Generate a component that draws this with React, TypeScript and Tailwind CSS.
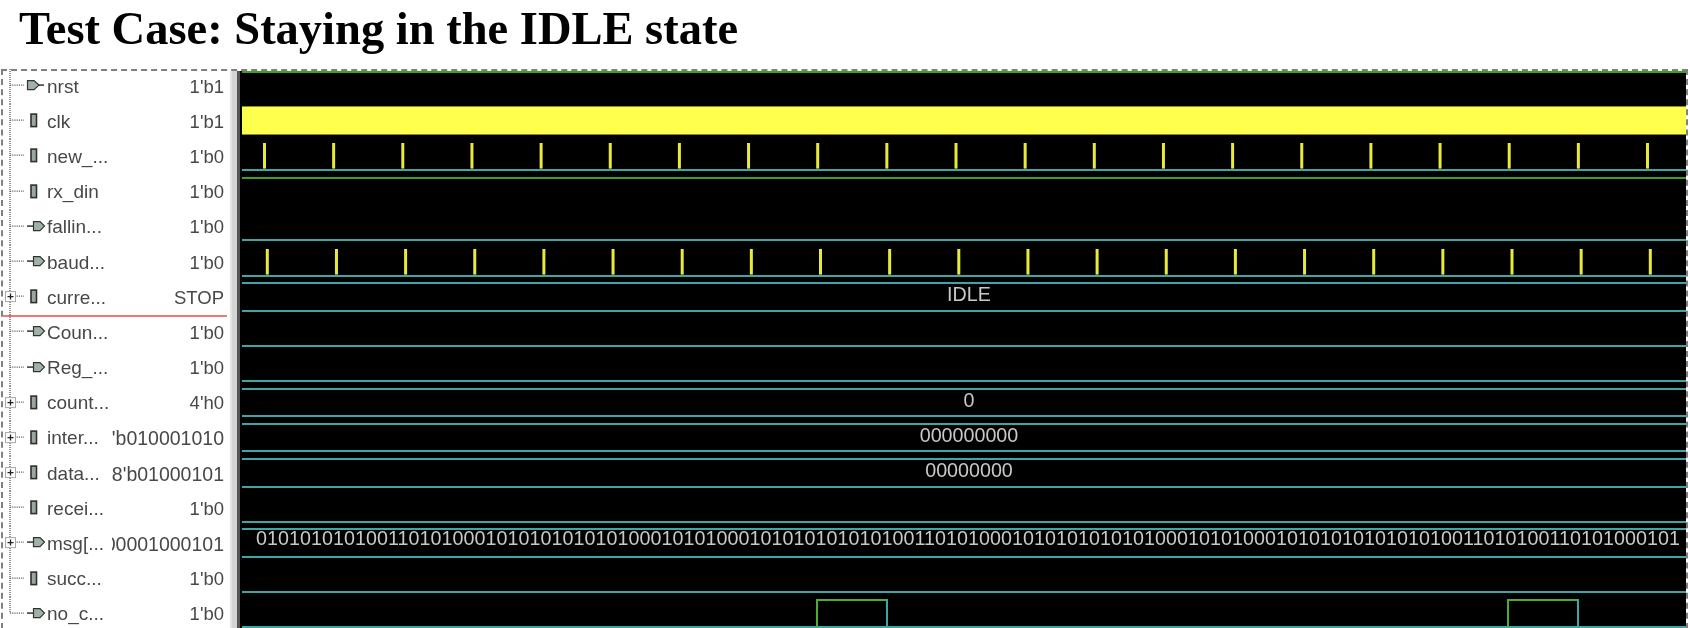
const TICKS_NEW = Array.from({ length: 21 }, (_, i) => 22.5 + i * 69.15);
const TICKS_BAUD = TICKS_NEW.map((x) => x + 2.8);
const MSG =
  '0101010101001' +
  '10101000' +
  '1010101010101000' +
  '10101000' +
  '1010101010101001' +
  '10101000' +
  '1010101010101000' +
  '10101000' +
  '101010101010101001' +
  '10101001' +
  '10101000' +
  '101';

type Port = 'in' | 'out' | 'reg';

interface Signal {
  name: string;
  value: string;
  port: Port;
  expand?: boolean;
}

const SIGNALS: Signal[] = [
  { name: 'nrst', value: "1'b1", port: 'in' },
  { name: 'clk', value: "1'b1", port: 'reg' },
  { name: 'new_...', value: "1'b0", port: 'reg' },
  { name: 'rx_din', value: "1'b0", port: 'reg' },
  { name: 'fallin...', value: "1'b0", port: 'out' },
  { name: 'baud...', value: "1'b0", port: 'out' },
  { name: 'curre...', value: 'STOP', port: 'reg', expand: true },
  { name: 'Coun...', value: "1'b0", port: 'out' },
  { name: 'Reg_...', value: "1'b0", port: 'out' },
  { name: 'count...', value: "4'h0", port: 'reg', expand: true },
  { name: 'inter...', value: "9'b010001010", port: 'reg', expand: true },
  { name: 'data...', value: "8'b01000101", port: 'reg', expand: true },
  { name: 'recei...', value: "1'b0", port: 'reg' },
  { name: 'msg[...', value: '00001000101', port: 'out', expand: true },
  { name: 'succ...', value: "1'b0", port: 'reg' },
  { name: 'no_c...', value: "1'b0", port: 'out' },
];

function TreeIcon({ port, expand, last }: { port: Port; expand?: boolean; last: boolean }) {
  return (
    <svg className="-my-[4px] h-[35.2px] w-[44px] shrink-0" viewBox="0 0 44 35">
      <path d={last ? 'M7 0V16' : 'M7 0V35'} stroke="#666" strokeWidth="1.4" strokeDasharray="1 1" fill="none" />
      <path d="M7 16H21" stroke="#666" strokeWidth="1.2" strokeDasharray="1.2 1" fill="none" />
      {expand && (
        <g>
          <rect x="2.5" y="11.5" width="10" height="10" fill="#fff" stroke="#aaa" />
          <path d="M4.5 16.5H10.5M7.5 13.5V19.5" stroke="#222" strokeWidth="1.3" />
        </g>
      )}
      {port === 'reg' && <rect x="28" y="10" width="5.5" height="12.5" fill="#9aa99c" stroke="#2f2f2f" strokeWidth="1.6" />}
      {port === 'in' && (
        <g>
          <path d="M24.5 11.5H31L36 16L31 20.5H24.5Z" fill="#9fb2a6" stroke="#333" strokeWidth="1.2" />
          <path d="M36 16H41" stroke="#333" strokeWidth="1.5" />
        </g>
      )}
      {port === 'out' && (
        <g>
          <path d="M24 16H30" stroke="#333" strokeWidth="1.5" />
          <path d="M30.5 11.5H37L41.5 16L37 20.5H30.5Z" fill="#9fb2a6" stroke="#333" strokeWidth="1.2" />
        </g>
      )}
    </svg>
  );
}

function NameRow({ signal, last }: { signal: Signal; last: boolean }) {
  return (
    <div className="relative flex h-[35.2px] items-center pr-[6px] pb-[4px] text-[19px] leading-[24px] text-[#484848]">
      <TreeIcon port={signal.port} expand={signal.expand} last={last} />
      <span className="whitespace-nowrap">{signal.name}</span>
      <div className="ml-auto flex w-[112px] shrink-0 justify-end overflow-hidden whitespace-nowrap">
        <span className={`shrink-0 ${signal.value.length > 5 ? 'text-[19.5px]' : 'text-[18.5px]'}`}>{signal.value}</span>
      </div>
      {signal.name === 'curre...' && <div className="absolute right-[3px] bottom-[0.5px] left-0 h-[2px] bg-[#ee7b78]" />}
    </div>
  );
}

function WaveRow({ top, low, children }: { top?: string; low?: string; children?: React.ReactNode }) {
  return (
    <div className="relative h-[35.2px]">
      <div className={`h-[2px] ${top ?? ''}`} />
      <div className="h-[25.6px]">{children}</div>
      <div className={`h-[2px] ${low ?? ''}`} />
    </div>
  );
}

function Ticks({ xs }: { xs: number[] }) {
  return (
    <svg className="h-full w-full" viewBox="0 0 1444 26" preserveAspectRatio="none">
      {xs.map((x) => (
        <rect key={x} x={x - 1.5} y="0" width="3" height="26" fill="#e9e93c" />
      ))}
    </svg>
  );
}

function BusText({ children, left }: { children: string; left?: boolean }) {
  return (
    <div
      className={`flex h-full items-center whitespace-nowrap text-[19.7px] leading-none text-[#c8c8c8] blur-[0.3px] ${left ? 'pb-[8px] pl-[14px] tracking-[0.05px]' : 'justify-center pb-[4px] pl-[10px]'}`}
    >
      {children}
    </div>
  );
}

function Pulses() {
  return (
    <svg className="absolute top-0 left-0 h-[30px] w-full" viewBox="0 0 1444 30" preserveAspectRatio="none">
      {[575, 1266].map((x) => (
        <g key={x} fill="none" strokeWidth="2">
          <path d={`M${x} 28V1H${x + 70}`} stroke="#4cae2e" />
          <path d={`M${x + 70} 0V28`} stroke="#3fa6a8" />
        </g>
      ))}
    </svg>
  );
}

const TEAL = 'bg-[#3fa6a8]';
const GREEN = 'bg-[#3f9f1f]';

export default function App() {
  return (
    <div className="h-[628px] w-[1690px] overflow-hidden bg-white">
      <h1 className="h-[69px] pl-[19px] pt-[3px] font-['Liberation_Serif',serif] text-[46.5px] leading-[52px] font-bold text-black blur-[0.3px]">
        Test Case: Staying in the IDLE state
      </h1>
      <div className="mr-[2px] ml-px flex h-[570px] border-x-2 border-t-2 border-dashed border-[#808080] font-['Liberation_Sans',sans-serif]">
        <div className="w-[227px] shrink-0 blur-[0.4px]">
          {SIGNALS.map((signal, i) => (
            <NameRow key={signal.name} signal={signal} last={i === SIGNALS.length - 1} />
          ))}
        </div>
        <div className="w-[2px] shrink-0 bg-[#e4e4e4]" />
        <div className="w-[5px] shrink-0 bg-[#d4d4d4]" />
        <div className="w-[3px] shrink-0 bg-[#555555]" />
        <div className="min-w-0 flex-1 overflow-hidden bg-black pl-[2px]">
          <WaveRow top={GREEN} />
          <div className="h-[35.2px]">
            <div className="h-[29px] border-y border-[#8a8a30] bg-[#ffff4d]" />
          </div>
          <WaveRow low={TEAL}>
            <Ticks xs={TICKS_NEW} />
          </WaveRow>
          <WaveRow top={GREEN} />
          <WaveRow low={TEAL} />
          <WaveRow low={TEAL}>
            <Ticks xs={TICKS_BAUD} />
          </WaveRow>
          <WaveRow top={TEAL} low={TEAL}>
            <BusText>IDLE</BusText>
          </WaveRow>
          <WaveRow low={TEAL} />
          <WaveRow low={TEAL} />
          <WaveRow top={TEAL} low={TEAL}>
            <BusText>0</BusText>
          </WaveRow>
          <WaveRow top={TEAL} low={TEAL}>
            <BusText>000000000</BusText>
          </WaveRow>
          <WaveRow top={TEAL} low={TEAL}>
            <BusText>00000000</BusText>
          </WaveRow>
          <WaveRow low={TEAL} />
          <WaveRow top={TEAL} low={TEAL}>
            <BusText left>{MSG}</BusText>
          </WaveRow>
          <WaveRow low={TEAL} />
          <div className="relative h-[35.2px]">
            <Pulses />
            <div className="pt-[27.6px]">
              <div className={`h-[2px] ${TEAL}`} />
            </div>
          </div>
        </div>
      </div>
    </div>
  );
}
